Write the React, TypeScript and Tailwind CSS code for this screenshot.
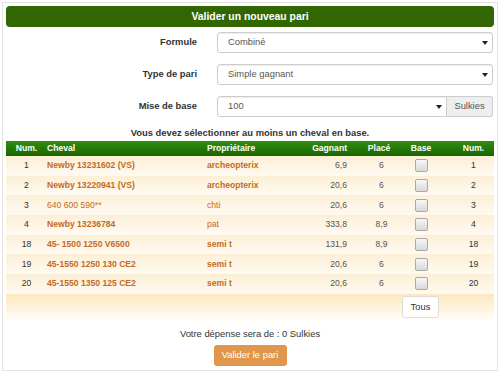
import React from "react";

type Row = {
  num: string;
  cheval: string;
  chevalBold: boolean;
  prop: string;
  propBold: boolean;
  gagnant: string;
  place: string;
};

const rows: Row[] = [
  { num: "1", cheval: "Newby 13231602 (VS)", chevalBold: true, prop: "archeopterix", propBold: true, gagnant: "6,9", place: "6" },
  { num: "2", cheval: "Newby 13220941 (VS)", chevalBold: true, prop: "archeopterix", propBold: true, gagnant: "20,6", place: "6" },
  { num: "3", cheval: "640 600 590**", chevalBold: false, prop: "chti", propBold: false, gagnant: "20,6", place: "6" },
  { num: "4", cheval: "Newby 13236784", chevalBold: true, prop: "pat", propBold: false, gagnant: "333,8", place: "8,9" },
  { num: "18", cheval: "45- 1500 1250 V6500", chevalBold: true, prop: "semi t", propBold: true, gagnant: "131,9", place: "8,9" },
  { num: "19", cheval: "45-1550 1250 130 CE2", chevalBold: true, prop: "semi t", propBold: true, gagnant: "20,6", place: "6" },
  { num: "20", cheval: "45-1550 1350 125 CE2", chevalBold: true, prop: "semi t", propBold: true, gagnant: "20,6", place: "6" },
];

const Arrow = () => (
  <svg width="6" height="4" viewBox="0 0 6 4" className="shrink-0">
    <polygon points="0,0 6,0 3,4" fill="#222" />
  </svg>
);

const Checkbox = () => (
  <div className="w-[13px] h-[13px] rounded-[2px] border border-[#a9a9a9] bg-gradient-to-b from-[#f7f7f7] to-[#d9d9d9]" />
);

const cols = "grid grid-cols-[41px_160px_93px_52px_56px_26px_59px]";

export default function App() {
  return (
    <div
      className="m-[2px] h-[369px] border border-[#e3e3e3] px-[3px] pt-[3px] bg-white text-[#333]"
      style={{ fontFamily: '"Liberation Sans", Arial, sans-serif' }}
    >
      <div className="h-[21px] rounded-[4px] bg-[#326601] text-white font-bold text-[10.4px] flex items-center justify-center">
        Valider un nouveau pari
      </div>

      <div className="mt-[5px] flex flex-col gap-[11px] text-[9.4px]">
        <div className="flex items-center h-[21px]">
          <div className="w-[191px] text-right font-bold">Formule</div>
          <div className="ml-[20px] mr-[1px] flex-1 h-[21px] border border-[#ccc] rounded-[3px] flex items-center justify-between pl-[10px] pr-[4px] text-[#555] shadow-[inset_0_1px_1px_rgba(0,0,0,0.075)]">
            <span>Combiné</span>
            <Arrow />
          </div>
        </div>
        <div className="flex items-center h-[21px]">
          <div className="w-[191px] text-right font-bold">Type de pari</div>
          <div className="ml-[20px] mr-[1px] flex-1 h-[21px] border border-[#ccc] rounded-[3px] flex items-center justify-between pl-[10px] pr-[4px] text-[#555] shadow-[inset_0_1px_1px_rgba(0,0,0,0.075)]">
            <span>Simple gagnant</span>
            <Arrow />
          </div>
        </div>
        <div className="flex items-center h-[21px]">
          <div className="w-[191px] text-right font-bold">Mise de base</div>
          <div className="ml-[20px] mr-[1px] flex-1 h-[21px] flex">
            <div className="flex-1 border border-[#ccc] rounded-l-[3px] flex items-center justify-between pl-[10px] pr-[4px] text-[#555] shadow-[inset_0_1px_1px_rgba(0,0,0,0.075)]">
              <span>100</span>
              <Arrow />
            </div>
            <div className="w-[46px] border border-l-0 border-[#ccc] rounded-r-[3px] bg-[#eeeeee] text-[#555] flex items-center justify-center">
              Sulkies
            </div>
          </div>
        </div>
      </div>

      <div className="mt-[10px] text-center font-bold text-[9.4px] leading-[12px]">
        Vous devez sélectionner au moins un cheval en base.
      </div>

      <div className="mt-[2px] text-[8.6px]">
        <div className={`${cols} h-[15px] items-center bg-gradient-to-b from-[#2e8f10] to-[#1a6500] text-white font-bold`}>
          <div className="text-center">Num.</div>
          <div className="pl-[0px]">Cheval</div>
          <div>Propriétaire</div>
          <div className="text-right pr-[5px]">Gagnant</div>
          <div className="text-center pr-[2px]">Placé</div>
          <div className="text-center">Base</div>
          <div className="text-center pl-[20px]">Num.</div>
        </div>
        {rows.map((r) => (
          <div
            key={r.num}
            className={`${cols} h-[19.67px] items-center bg-gradient-to-b from-[#fcefd6] to-[#fffaf1]`}
          >
            <div className="text-center text-[#333]">{r.num}</div>
            <div className={`text-[#c56a1e] ${r.chevalBold ? "font-bold" : ""}`}>{r.cheval}</div>
            <div className={`text-[#c56a1e] ${r.propBold ? "font-bold" : ""}`}>{r.prop}</div>
            <div className="text-right pr-[5px] text-[#555]">{r.gagnant}</div>
            <div className="text-center pl-[3px] text-[#555]">{r.place}</div>
            <div className="flex justify-center">
              <Checkbox />
            </div>
            <div className="text-center pl-[20px] text-[#333]">{r.num}</div>
          </div>
        ))}
        <div className="h-[27px] bg-gradient-to-b from-[#fde8bd] to-[#fffefb] flex items-center">
          <div className="ml-[396px] w-[37px] h-[22px] bg-white border border-[#dcdcdc] rounded-[3px] flex items-center justify-center text-[9.4px] text-[#333]">
            Tous
          </div>
        </div>
      </div>

      <div className="mt-[7px] text-center text-[9.4px] leading-[12px] text-[#333]">
        Votre dépense sera de : 0 Sulkies
      </div>
      <div className="mt-[5px] flex justify-center">
        <div className="w-[73px] h-[21px] rounded-[3px] bg-[#e0964d] text-white text-[9.4px] flex items-center justify-center">
          Valider le pari
        </div>
      </div>
    </div>
  );
}
